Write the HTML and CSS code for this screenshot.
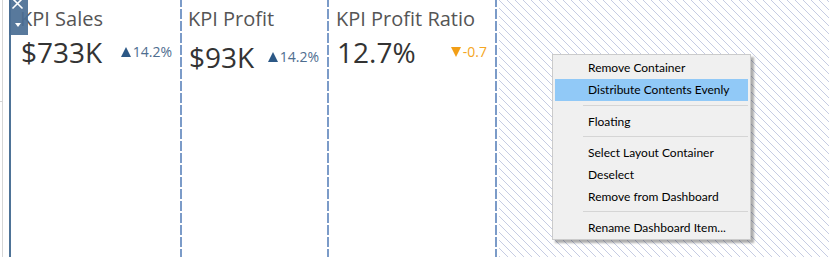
FILE: index.html
```html
<!DOCTYPE html>
<html>
<head>
<meta charset="utf-8">
<link rel="stylesheet" href="styles.css">
</head>
<body>
<div class="page">
  <div class="gutter"></div>
  <div class="container">
    <div class="card card-sales">
      <div class="title">KPI Sales</div>
      <div class="value-row">
        <span class="value">$733K</span>
        <span class="delta up"><i class="tri tri-up"></i>14.2%</span>
      </div>
    </div>
    <div class="card card-profit">
      <div class="title">KPI Profit</div>
      <div class="value-row">
        <span class="value">$93K</span>
        <span class="delta up"><i class="tri tri-up"></i>14.2%</span>
      </div>
    </div>
    <div class="card card-ratio">
      <div class="title">KPI Profit Ratio</div>
      <div class="value-row">
        <span class="value">12.7%</span>
        <span class="delta down"><i class="tri tri-down"></i>-0.7</span>
      </div>
    </div>
    <div class="handle">
      <svg width="19" height="35" viewBox="0 0 19 35">
        <path d="M3.5 -1.5 L13.5 8.5 M13.5 -1.5 L3.5 8.5" stroke="#fff" stroke-width="1.6" fill="none"/>
        <path d="M6 23 L12 23 L9 27 Z" fill="#fff"/>
      </svg>
    </div>
  </div>
  <div class="hatch"></div>
  <div class="menu">
    <div class="item">Remove Container</div>
    <div class="item active">Distribute Contents Evenly</div>
    <div class="sep"></div>
    <div class="item">Floating</div>
    <div class="sep sep-b"></div>
    <div class="item">Select Layout Container</div>
    <div class="item">Deselect</div>
    <div class="item">Remove from Dashboard</div>
    <div class="sep sep-b"></div>
    <div class="item">Rename Dashboard Item...</div>
  </div>
</div>
</body>
</html>
```
FILE: styles.css
```css
html, body {
  margin: 0;
  padding: 0;
  background: #fff;
}
.page {
  position: relative;
  display: flex;
  width: 829px;
  height: 257px;
  overflow: hidden;
  font-family: "Open Sans", "Noto Sans", sans-serif;
}
.gutter {
  width: 9px;
  flex: none;
  background:
    linear-gradient(#d4d4d4, #d4d4d4) 0 101px / 3px 1px no-repeat,
    linear-gradient(to right, transparent 2px, #d6d6d6 2px, #d6d6d6 3px, transparent 3px);
}
.container {
  position: relative;
  display: flex;
  flex: none;
  border-left: 2px solid #4e7397;
}
.card {
  flex: none;
  box-sizing: border-box;
  height: 257px;
  padding: 7px 10px 0 7px;
  background: linear-gradient(to bottom, #7b9bc8 10px, transparent 10px) right 9px / 2px 12px repeat-y;
}
.card-sales { width: 171px; padding-left: 9px; }
.card-profit { width: 147px; padding-left: 6px; }
.card-ratio { width: 168px; padding-left: 7px; padding-right: 10px; }
.title {
  font-size: 20px;
  line-height: 24px;
  color: #555;
  white-space: nowrap;
}
.value-row {
  display: flex;
  justify-content: space-between;
  align-items: center;
  margin-top: 5px;
  padding-left: 1px;
}
.card-profit .value-row { margin-top: 10px; }
.value {
  font-size: 28px;
  line-height: 32px;
  color: #333;
}
.delta {
  display: flex;
  align-items: center;
  font-size: 14px;
  line-height: 16px;
}
.delta.up { color: #4e6d8f; }
.delta.down { color: #f5a623; }
.tri {
  display: block;
  width: 0;
  height: 0;
  margin-right: 2px;
  border-left: 5px solid transparent;
  border-right: 5px solid transparent;
}
.tri-up { border-bottom: 10px solid #2c5886; }
.tri-down { border-top: 10px solid #f29f17; }
.handle {
  position: absolute;
  left: -2px;
  top: 0;
  width: 19px;
  height: 35px;
  background: rgba(74, 110, 148, 0.92);
}
.handle svg { display: block; }
.hatch {
  flex: 1;
  margin-left: 2px;
  background: repeating-linear-gradient(45deg, #c6cce3 0, #c6cce3 1px, transparent 1px, transparent 5.66px);
}
.menu {
  position: absolute;
  left: 552px;
  top: 54px;
  width: 193px;
  padding: 2px 2px 0 2px;
  background: #f0f0f0;
  border: 1px solid #cbcbcb;
  box-shadow: 3px 3px 2px rgba(0, 0, 0, 0.32);
  font-family: "Lato", "Noto Sans", sans-serif;
  font-size: 12px;
  color: #000;
}
.item {
  height: 22px;
  line-height: 22px;
  padding-left: 33px;
  white-space: nowrap;
}
.item.active { background: #91c9f7; }
.sep {
  height: 10px;
  margin-left: 28px;
  background: linear-gradient(#d5d5d5, #d5d5d5) 0 4px / 100% 1px no-repeat;
}
.sep-b {
  height: 9px;
  background-position: 0 3px;
}
```
